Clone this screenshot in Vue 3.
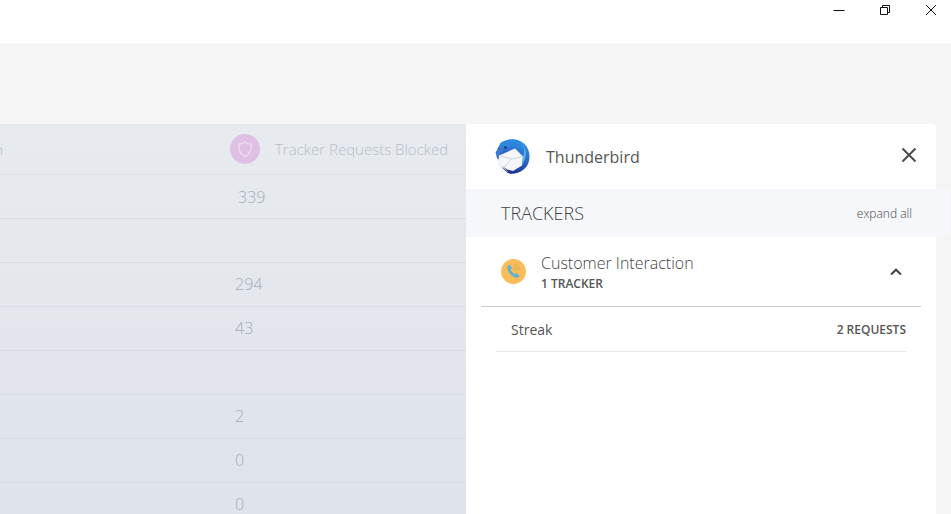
<script setup>
const rows = [
  { value: '339', shift: true },
  { value: '' },
  { value: '294' },
  { value: '43' },
  { value: '' },
  { value: '2' },
  { value: '0' },
  { value: '0' },
]
</script>

<template>
  <div class="page">
    <header class="titlebar">
      <button class="win-btn" aria-label="Minimize">
        <svg width="12" height="12" viewBox="0 0 12 12"><path d="M0.5 6.500H11.500" stroke="#111" fill="none" /></svg>
      </button>
      <button class="win-btn" aria-label="Restore">
        <svg width="12" height="12" viewBox="0 0 12 12"><path d="M1.500 3.500H8.500V10.500H1.500ZM3.500 3.500V1.500H10.500V8.500H8.500" stroke="#111" fill="none" /></svg>
      </button>
      <button class="win-btn" aria-label="Close">
        <svg width="12" height="12" viewBox="0 0 12 12"><path d="M1 1L11 11M11 1L1 11" stroke="#111" fill="none" /></svg>
      </button>
    </header>

    <main class="stage">
      <section class="table">
        <div class="thead">
          <span class="head-edge">n</span>
          <span class="shield">
            <svg width="16" height="17" viewBox="0 0 16 17"><path d="M8 1.200C10 2.500 12 3 14.300 3.100C14.600 8.500 12.800 13 8 15.800C3.200 13 1.400 8.500 1.700 3.100C4 3 6 2.500 8 1.200Z" fill="none" stroke="#eedff0" stroke-width="1.300" /></svg>
          </span>
          <span class="head-label">Tracker Requests Blocked</span>
        </div>
        <div v-for="(row, i) in rows" :key="i" class="trow">
          <span class="cell" :class="{ shifted: row.shift }">{{ row.value }}</span>
        </div>
      </section>

      <aside class="panel">
        <div class="app-head">
          <svg class="logo" width="37" height="37" viewBox="0 0 37 37">
            <defs>
              <linearGradient id="tb" x1="0.8" y1="0" x2="0.4" y2="1">
                <stop offset="0" stop-color="#2f9ae6" />
                <stop offset="0.55" stop-color="#2a62c4" />
                <stop offset="1" stop-color="#1c2f8c" />
              </linearGradient>
            </defs>
            <path d="M10 3.500C16 0 24 0.500 30 5.500C36 11 37 20 33.500 27C29.500 34 20 37.500 13 34.500L3 20L2.500 15C3 10 6 6 10 3.500Z" fill="url(#tb)" />
            <path d="M6 5.500C12 0 22 0.500 28 4.500C21 3.500 17 5.500 15.500 9C12 8 9 11 6.500 15C5 11.500 5 8 6 5.500Z" fill="#2b88dc" />
            <path d="M1.500 14C3.500 12 6 9.500 8.500 8.500L10 12L3 20Z" fill="#3c79cc" />
            <path d="M5 17.500L21 10.500L29 18.500L28 27.500L19 33L13 31.500L7 27L3.500 26Z" fill="#f4f6f9" />
            <path d="M5 17.500L17.500 21L29 18.500M10 29L17.500 21" fill="none" stroke="#c3cfdf" stroke-width="0.900" />
            <path d="M29 18.500C31 14 30.500 9 27 6C32 9.500 33 15 31 21L28.500 27.500Z" fill="#54b1ee" />
            <path d="M3 25L9 28.500L14 34L8 33Z" fill="#edf1f6" />
            <path d="M8 28.500L14 34.500L21 36C16 36.500 11 34 8 28.500Z" fill="#18276d" />
            <circle cx="11.500" cy="9.500" r="1.200" fill="#0f2d68" />
          </svg>
          <h1 class="app-name">Thunderbird</h1>
          <button class="close" aria-label="Close panel">
            <svg width="16" height="16" viewBox="0 0 16 16"><path d="M1.500 1.500L14.500 14.500M14.500 1.500L1.500 14.500" stroke="#4d4d4d" stroke-width="2" fill="none" /></svg>
          </button>
        </div>

        <div class="band">
          <span class="band-title">TRACKERS</span>
          <span class="expand">expand all</span>
        </div>

        <div class="category">
          <span class="cat-icon">
            <svg width="17" height="17" viewBox="0 0 17 17">
              <path d="M3 2.800L4.600 1.800L7 5L5.600 6.800C6.300 8.500 8 10.300 9.900 11.100L11.500 10L14.500 12.800L13.200 14.400C12 15.300 9.500 14.800 6.500 12.300C3 9.300 1.500 5 3 2.800Z" fill="#5fb3cf" />
              <path d="M8.500 3.500C10.500 3.900 12.300 5.700 12.700 7.700M9.500 1.500C12.300 2 14.700 4.400 15.200 7.200M8.300 5.700C9.300 6 10.300 7 10.600 8" fill="none" stroke="#d2ad52" stroke-width="1" />
            </svg>
          </span>
          <div class="cat-text">
            <div class="cat-name">Customer Interaction</div>
            <div class="cat-count">1 TRACKER</div>
          </div>
          <svg class="chevron" width="12" height="8" viewBox="0 0 12 8"><path d="M1 6.500L6 1.700L11 6.500" stroke="#444" stroke-width="2" fill="none" /></svg>
        </div>

        <div class="tracker">
          <span class="tracker-name">Streak</span>
          <span class="tracker-req">2 REQUESTS</span>
        </div>
      </aside>
    </main>
  </div>
</template>

<style>
html, body { margin: 0; background: #f5f5f5; overflow: hidden; }
</style>

<style scoped>
.page {
  width: 951px;
  height: 514px;
  display: flex;
  flex-direction: column;
  background: #f5f5f5;
  font-family: "Open Sans", sans-serif;
  overflow: hidden;
}
.titlebar {
  height: 43px;
  flex: none;
  background: #fff;
  display: flex;
  justify-content: flex-end;
  align-items: flex-start;
  padding-right: 0;
}
.win-btn {
  width: 46px;
  height: 20px;
  padding: 0;
  border: 0;
  background: none;
  display: flex;
  align-items: center;
  justify-content: center;
  position: relative;
  left: 3px;
}
.stage {
  margin-top: 81px;
  display: flex;
  flex: 1;
  min-height: 0;
}
.table {
  width: 466px;
  flex: none;
  background: linear-gradient(180deg, #e7ebef 0%, #dfe3ea 100%);
}
.thead {
  height: 50px;
  display: flex;
  align-items: center;
  padding-left: 230px;
  border-bottom: 1px solid #dee2e7;
  position: relative;
}
.head-edge {
  position: absolute;
  left: -6px;
  top: 15px;
  font-size: 15px;
  color: #c4c6cf;
}
.shield {
  width: 30px;
  height: 30px;
  border-radius: 50%;
  background: #dfbfe3;
  display: flex;
  align-items: center;
  justify-content: center;
  flex: none;
}
.head-label {
  margin-left: 15px;
  font-size: 15px;
  font-weight: 300;
  color: #b9bcc6;
  white-space: nowrap;
}
.trow {
  height: 43px;
  border-bottom: 1px solid #d9dde3;
  padding-left: 235px;
  display: flex;
  align-items: center;
  line-height: 42px;
}
.cell {
  font-size: 16px;
  font-weight: 300;
  color: #a7abb6;
  position: relative;
  top: -1px;
}
.shifted { margin-left: 3px; top: 0; }
.panel {
  width: 470px;
  flex: none;
  background: #fff;
  border-radius: 4px 4px 0 0;
}
.app-head {
  height: 65px;
  display: flex;
  align-items: center;
  padding: 0 19px 0 28px;
}
.logo { flex: none; }
.app-name {
  margin: 0 0 0 15px;
  font-size: 16px;
  font-weight: 400;
  color: #555;
  flex: 1;
}
.close {
  border: 0;
  background: none;
  padding: 0 0 4px;
  display: flex;
}
.band {
  width: 484px;
  height: 48px;
  background: #f5f7fb;
  display: flex;
  align-items: center;
  justify-content: space-between;
  box-sizing: border-box;
  padding: 0 38px 0 35px;
}
.band-title {
  font-size: 18px;
  font-weight: 300;
  color: #444;
}
.expand {
  font-size: 12px;
  font-weight: 300;
  color: #444;
}
.category {
  margin: 0 15px;
  height: 69px;
  display: flex;
  align-items: center;
  border-bottom: 1px solid #ccc;
  padding: 0 20px;
}
.cat-icon {
  width: 25px;
  height: 25px;
  border-radius: 50%;
  background: #fbbd59;
  display: flex;
  align-items: center;
  justify-content: center;
  flex: none;
}
.cat-text {
  margin-left: 15px;
  padding-top: 2px;
  flex: 1;
}
.cat-name {
  font-size: 16px;
  font-weight: 300;
  color: #444;
  line-height: 22px;
}
.cat-count {
  font-size: 12px;
  font-weight: 600;
  color: #555;
  line-height: 20px;
}
.chevron { flex: none; margin-right: -1px; }
.tracker {
  margin: 0 30px;
  height: 44px;
  display: flex;
  align-items: center;
  justify-content: space-between;
  border-bottom: 1px solid #e8e8e8;
  padding: 0 0 0 15px;
}
.tracker-name {
  font-size: 14px;
  color: #555;
}
.tracker-req {
  font-size: 12px;
  font-weight: 600;
  color: #555;
}
</style>
